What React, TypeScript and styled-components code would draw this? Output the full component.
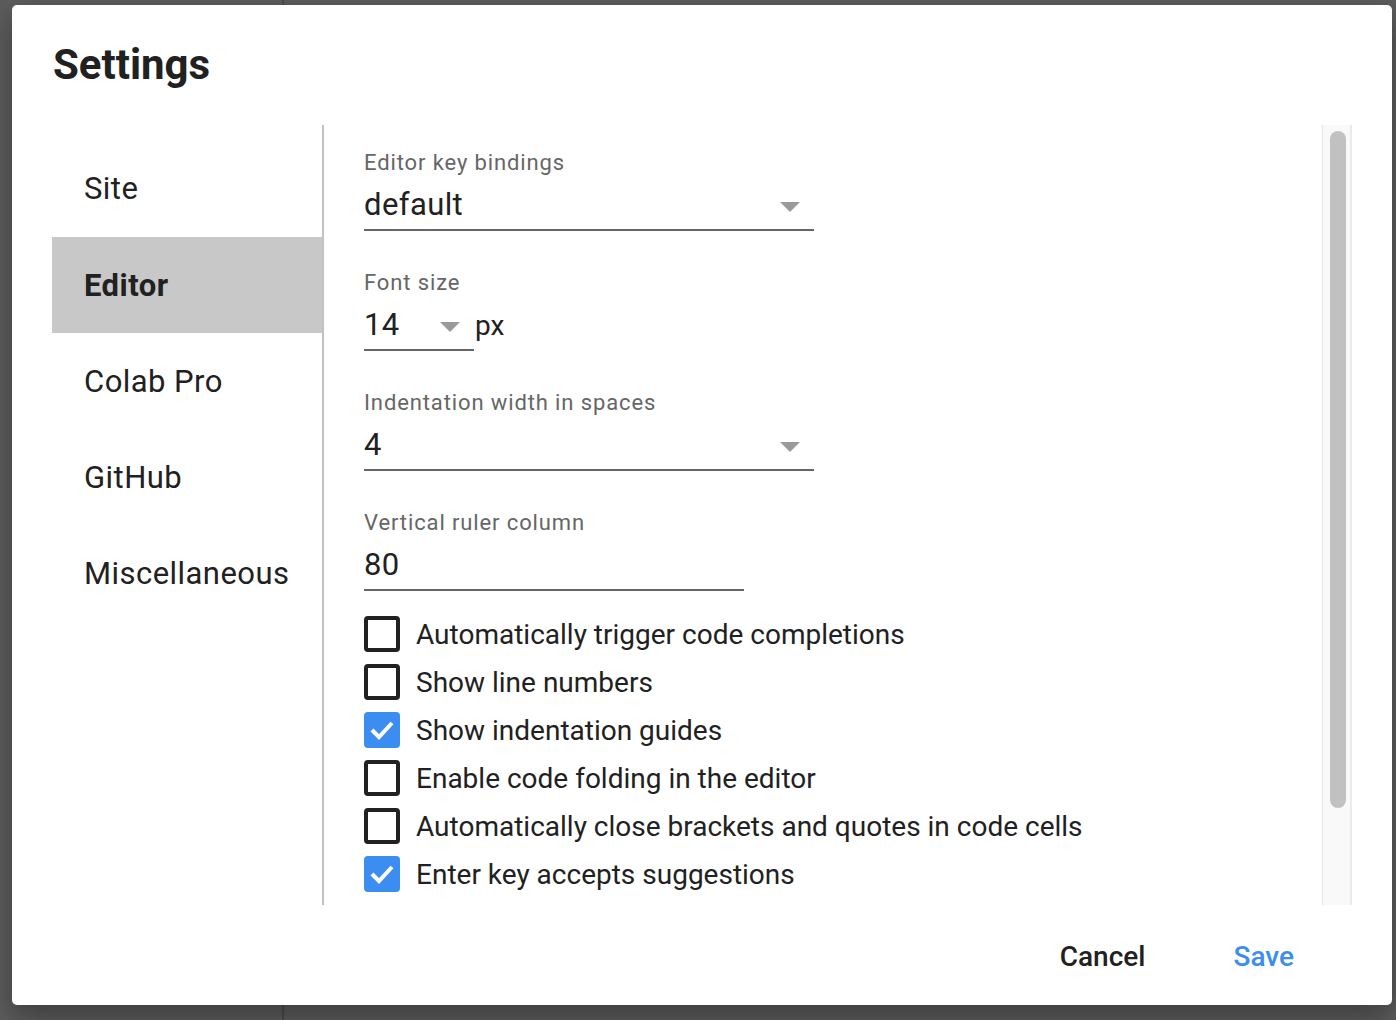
import * as React from 'react';
import styled, { createGlobalStyle } from 'styled-components';

const GlobalStyle = createGlobalStyle`
  html, body {
    margin: 0;
    padding: 0;
  }
  body {
    font-family: Roboto, "Liberation Sans", Arial, sans-serif;
    color: #212121;
    background: #5c5c5c;
  }
`;

interface ISelectField {
  label: string;
  value: string;
  width: number;
  suffix?: string;
}

const fields: ISelectField[] = [
  { label: 'Editor key bindings', value: 'default', width: 450 },
  { label: 'Font size', value: '14', width: 110, suffix: 'px' },
  { label: 'Indentation width in spaces', value: '4', width: 450 },
];

const options = [
  { label: 'Automatically trigger code completions', checked: false },
  { label: 'Show line numbers', checked: false },
  { label: 'Show indentation guides', checked: true },
  { label: 'Enable code folding in the editor', checked: false },
  { label: 'Automatically close brackets and quotes in code cells', checked: false },
  { label: 'Enter key accepts suggestions', checked: true },
];

const tabs = ['Site', 'Editor', 'Colab Pro', 'GitHub', 'Miscellaneous'];

function DropArrow() {
  return (
    <svg width="20" height="10" viewBox="0 0 20 10">
      <polygon points="0,0 20,0 10,10" fill="#9a9a9a" />
    </svg>
  );
}

function CheckMark() {
  return (
    <svg width="36" height="36" viewBox="0 0 36 36">
      <path d="M8 18 L15 25 L28 11" fill="none" stroke="#fff" strokeWidth="4" />
    </svg>
  );
}

export default function App() {
  return (
    <Page>
      <GlobalStyle />
      <SidePanelLine />
      <Dialog>
        <Title>Settings</Title>
        <Body>
          <Sidebar>
            {tabs.map((t) => (
              <Tab key={t} active={t === 'Editor'}>
                {t}
              </Tab>
            ))}
          </Sidebar>
          <Content>
            {fields.map((f) => (
              <Field key={f.label}>
                <Label>{f.label}</Label>
                <FieldRow>
                  <Select style={{ width: f.width }}>
                    <span>{f.value}</span>
                    <ArrowWrap>
                      <DropArrow />
                    </ArrowWrap>
                  </Select>
                  {f.suffix && <Suffix>{f.suffix}</Suffix>}
                </FieldRow>
              </Field>
            ))}
            <Field last>
              <Label>Vertical ruler column</Label>
              <Select style={{ width: 380 }}>
                <span>80</span>
              </Select>
            </Field>
            <CheckList>
              {options.map((o) => (
                <CheckRow key={o.label}>
                  <CheckBox checked={o.checked}>{o.checked && <CheckMark />}</CheckBox>
                  <CheckLabel>{o.label}</CheckLabel>
                </CheckRow>
              ))}
            </CheckList>
          </Content>
          <ScrollTrack>
            <ScrollThumb />
          </ScrollTrack>
        </Body>
        <Footer>
          <TextButton>Cancel</TextButton>
          <TextButton primary>Save</TextButton>
        </Footer>
      </Dialog>
    </Page>
  );
}

const Page = styled.div`
  position: relative;
  width: 1396px;
  height: 1020px;
  overflow: hidden;
  background: #5c5c5c;
`;

const SidePanelLine = styled.div`
  position: absolute;
  left: 282px;
  top: 0;
  width: 2px;
  height: 100%;
  background: #4a4a4a;
`;

const Dialog = styled.div`
  position: absolute;
  left: 12px;
  top: 5px;
  width: 1380px;
  height: 1000px;
  background: #fff;
  border-radius: 5px;
  box-shadow: 0 12px 30px rgba(0, 0, 0, 0.35);
  display: flex;
  flex-direction: column;
`;

const Title = styled.h1`
  margin: 0;
  padding: 35px 0 35px 41px;
  font-size: 42px;
  line-height: 50px;
  font-weight: 700;
  color: #212121;
`;

const Body = styled.div`
  display: flex;
  height: 780px;
  padding: 0 40px;
`;

const Sidebar = styled.nav`
  width: 270px;
  flex: none;
  padding-top: 15px;
  border-right: 2px solid #c2c2c2;
`;

const Tab = styled.div<{ active?: boolean }>`
  height: 96px;
  display: flex;
  align-items: center;
  padding-left: 32px;
  font-size: 31px;
  letter-spacing: 0.45px;
  font-weight: ${(p) => (p.active ? 700 : 400)};
  background: ${(p) => (p.active ? '#c8c8c8' : 'transparent')};
  color: #212121;

  &:nth-child(2) {
    margin-top: 1px;
  }
`;

const Content = styled.div`
  flex: 1;
  overflow: hidden;
  padding: 25px 0 0 40px;
`;

const ScrollTrack = styled.div`
  box-sizing: border-box;
  width: 30px;
  flex: none;
  padding: 6px 4px 0 7px;
  background: #f9f9f9;
  border-left: 1px solid #e6e6e6;
  border-right: 2px solid #ebebeb;
`;

const ScrollThumb = styled.div`
  height: 677px;
  border-radius: 8px;
  background: #c1c1c1;
`;

const Field = styled.div<{ last?: boolean }>`
  margin-bottom: ${(p) => (p.last ? '19px' : '39px')};
`;

const Label = styled.div`
  font-size: 22px;
  line-height: 26px;
  letter-spacing: 0.88px;
  color: #666;
`;

const FieldRow = styled.div`
  display: flex;
  align-items: baseline;
`;

const Select = styled.div`
  box-sizing: border-box;
  display: flex;
  justify-content: space-between;
  height: 55px;
  padding: 5px 14px 0 0;
  font-size: 31px;
  line-height: 48px;
  letter-spacing: 0.4px;
  color: #212121;
  border-bottom: 2px solid #666;
`;

const ArrowWrap = styled.span`
  display: flex;
  align-items: center;
  padding-top: 4px;
`;

const Suffix = styled.span`
  font-size: 28px;
  line-height: 48px;
  margin-left: 1px;
  color: #212121;
`;

const CheckList = styled.div`
  display: flex;
  flex-direction: column;
`;

const CheckRow = styled.label`
  display: flex;
  align-items: center;
  height: 48px;
`;

const CheckBox = styled.span<{ checked?: boolean }>`
  box-sizing: border-box;
  width: 36px;
  height: 36px;
  flex: none;
  border-radius: 4px;
  border: ${(p) => (p.checked ? 'none' : '4px solid #212121')};
  background: ${(p) => (p.checked ? '#3b8eef' : '#fff')};
  display: flex;
`;

const CheckLabel = styled.span`
  margin-left: 16px;
  font-size: 28px;
  color: #212121;
`;

const Footer = styled.div`
  flex: 1;
  display: flex;
  justify-content: flex-end;
  align-items: center;
  gap: 24px;
  padding: 4px 66px 0 0;
`;

const TextButton = styled.button<{ primary?: boolean }>`
  border: none;
  background: none;
  padding: 0 32px;
  font-family: Roboto, "Liberation Sans", Arial, sans-serif;
  font-size: 28px;
  font-weight: 500;
  line-height: 48px;
  color: ${(p) => (p.primary ? '#3b8eef' : '#212121')};
  cursor: pointer;
`;
